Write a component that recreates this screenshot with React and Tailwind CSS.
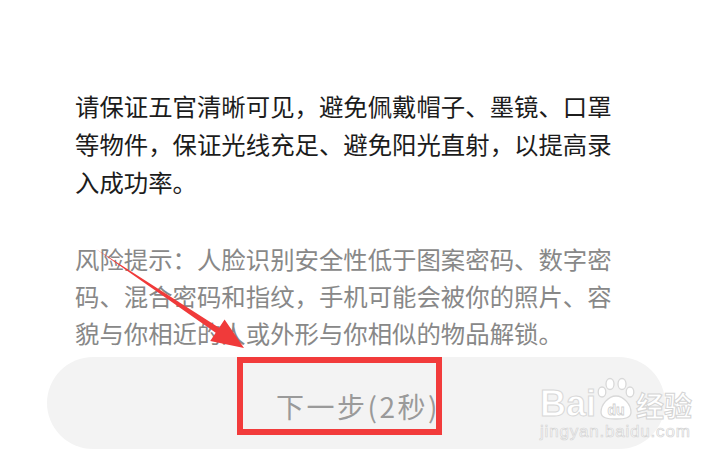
export default function App() {
  const cjk = { fontFamily: '"Noto Sans CJK SC", "Noto Sans", sans-serif' };
  const latin = { fontFamily: '"Liberation Sans", sans-serif' };
  return (
    <div className="relative w-[704px] h-[460px] bg-white overflow-hidden" style={cjk}>
      <div className="pl-[75px] pt-[87px]">
        <div className="text-[24.4px] leading-[38px] text-[#1c1c1c] whitespace-nowrap">
          <div>请保证五官清晰可见，避免佩戴帽子、墨镜、口罩</div>
          <div>等物件，保证光线充足、避免阳光直射，以提高录</div>
          <div>入成功率。</div>
        </div>
        <div className="mt-[39px] text-[24.4px] leading-[37px] text-[#888888] whitespace-nowrap">
          <div>风险提示：人脸识别安全性低于图案密码、数字密</div>
          <div>码、混合密码和指纹，手机可能会被你的照片、容</div>
          <div>貌与你相近的人或外形与你相似的物品解锁。</div>
        </div>
      </div>
      <div className="relative ml-[47px] mr-[39px] mt-[6px] h-[92px] rounded-full bg-[#f3f3f3] flex items-center justify-center">
        <span className="text-[28px] text-[#9a9a9a] pt-[5px] pl-[4px] tracking-[2.5px]">下一步(2秒)</span>

        {/* watermark */}
        <div className="absolute left-[493px] top-[20px] w-max whitespace-nowrap flex flex-col items-start select-none">
          <div className="flex items-end">
            <span className="text-[36px] leading-[34px] font-bold text-white [-webkit-text-stroke:1px_#d8d8d8]" style={latin}>Bai</span>
            <svg width="38" height="44" viewBox="0 0 38 44" className="ml-[1px] shrink-0">
              <g fill="#ffffff" stroke="#d8d8d8" strokeWidth="1.3">
                <ellipse cx="5" cy="15" rx="3.8" ry="5" />
                <ellipse cx="13" cy="7" rx="4" ry="5.5" />
                <ellipse cx="25" cy="7" rx="4" ry="5.5" />
                <ellipse cx="33" cy="15" rx="3.8" ry="5" />
                <path d="M19 19 C11 19 4 28 4 35 C4 41 10 42 19 42 C28 42 34 41 34 35 C34 28 27 19 19 19 Z" />
              </g>
              <text x="19" y="38" textAnchor="middle" fontSize="14" fontWeight="bold" fill="#ffffff" stroke="#d0d0d0" strokeWidth="0.8" style={latin}>du</text>
            </svg>
            <span className="ml-[1px] text-[28px] leading-[32px] font-bold text-white [-webkit-text-stroke:1px_#d4d4d4]">经验</span>
          </div>
          <span className="mt-[2px] text-[17px] leading-[18px] text-white tracking-[0.8px] [-webkit-text-stroke:0.7px_#d4d4d4]" style={latin}>jingyan.baidu.com</span>
        </div>
      </div>

      {/* red highlight box */}
      <div className="absolute left-[237px] top-[357px] w-[205px] h-[78px] border-[6px] border-[#f23b3b]"></div>

      {/* arrow */}
      <svg className="absolute left-0 top-0 pointer-events-none" width="704" height="460">
        <polygon
          points="96,249 219.1,327.7 224.6,319.4 244,348 210.2,341 215.7,332.7"
          fill="#f03a3a"
        />
      </svg>
    </div>
  );
}
